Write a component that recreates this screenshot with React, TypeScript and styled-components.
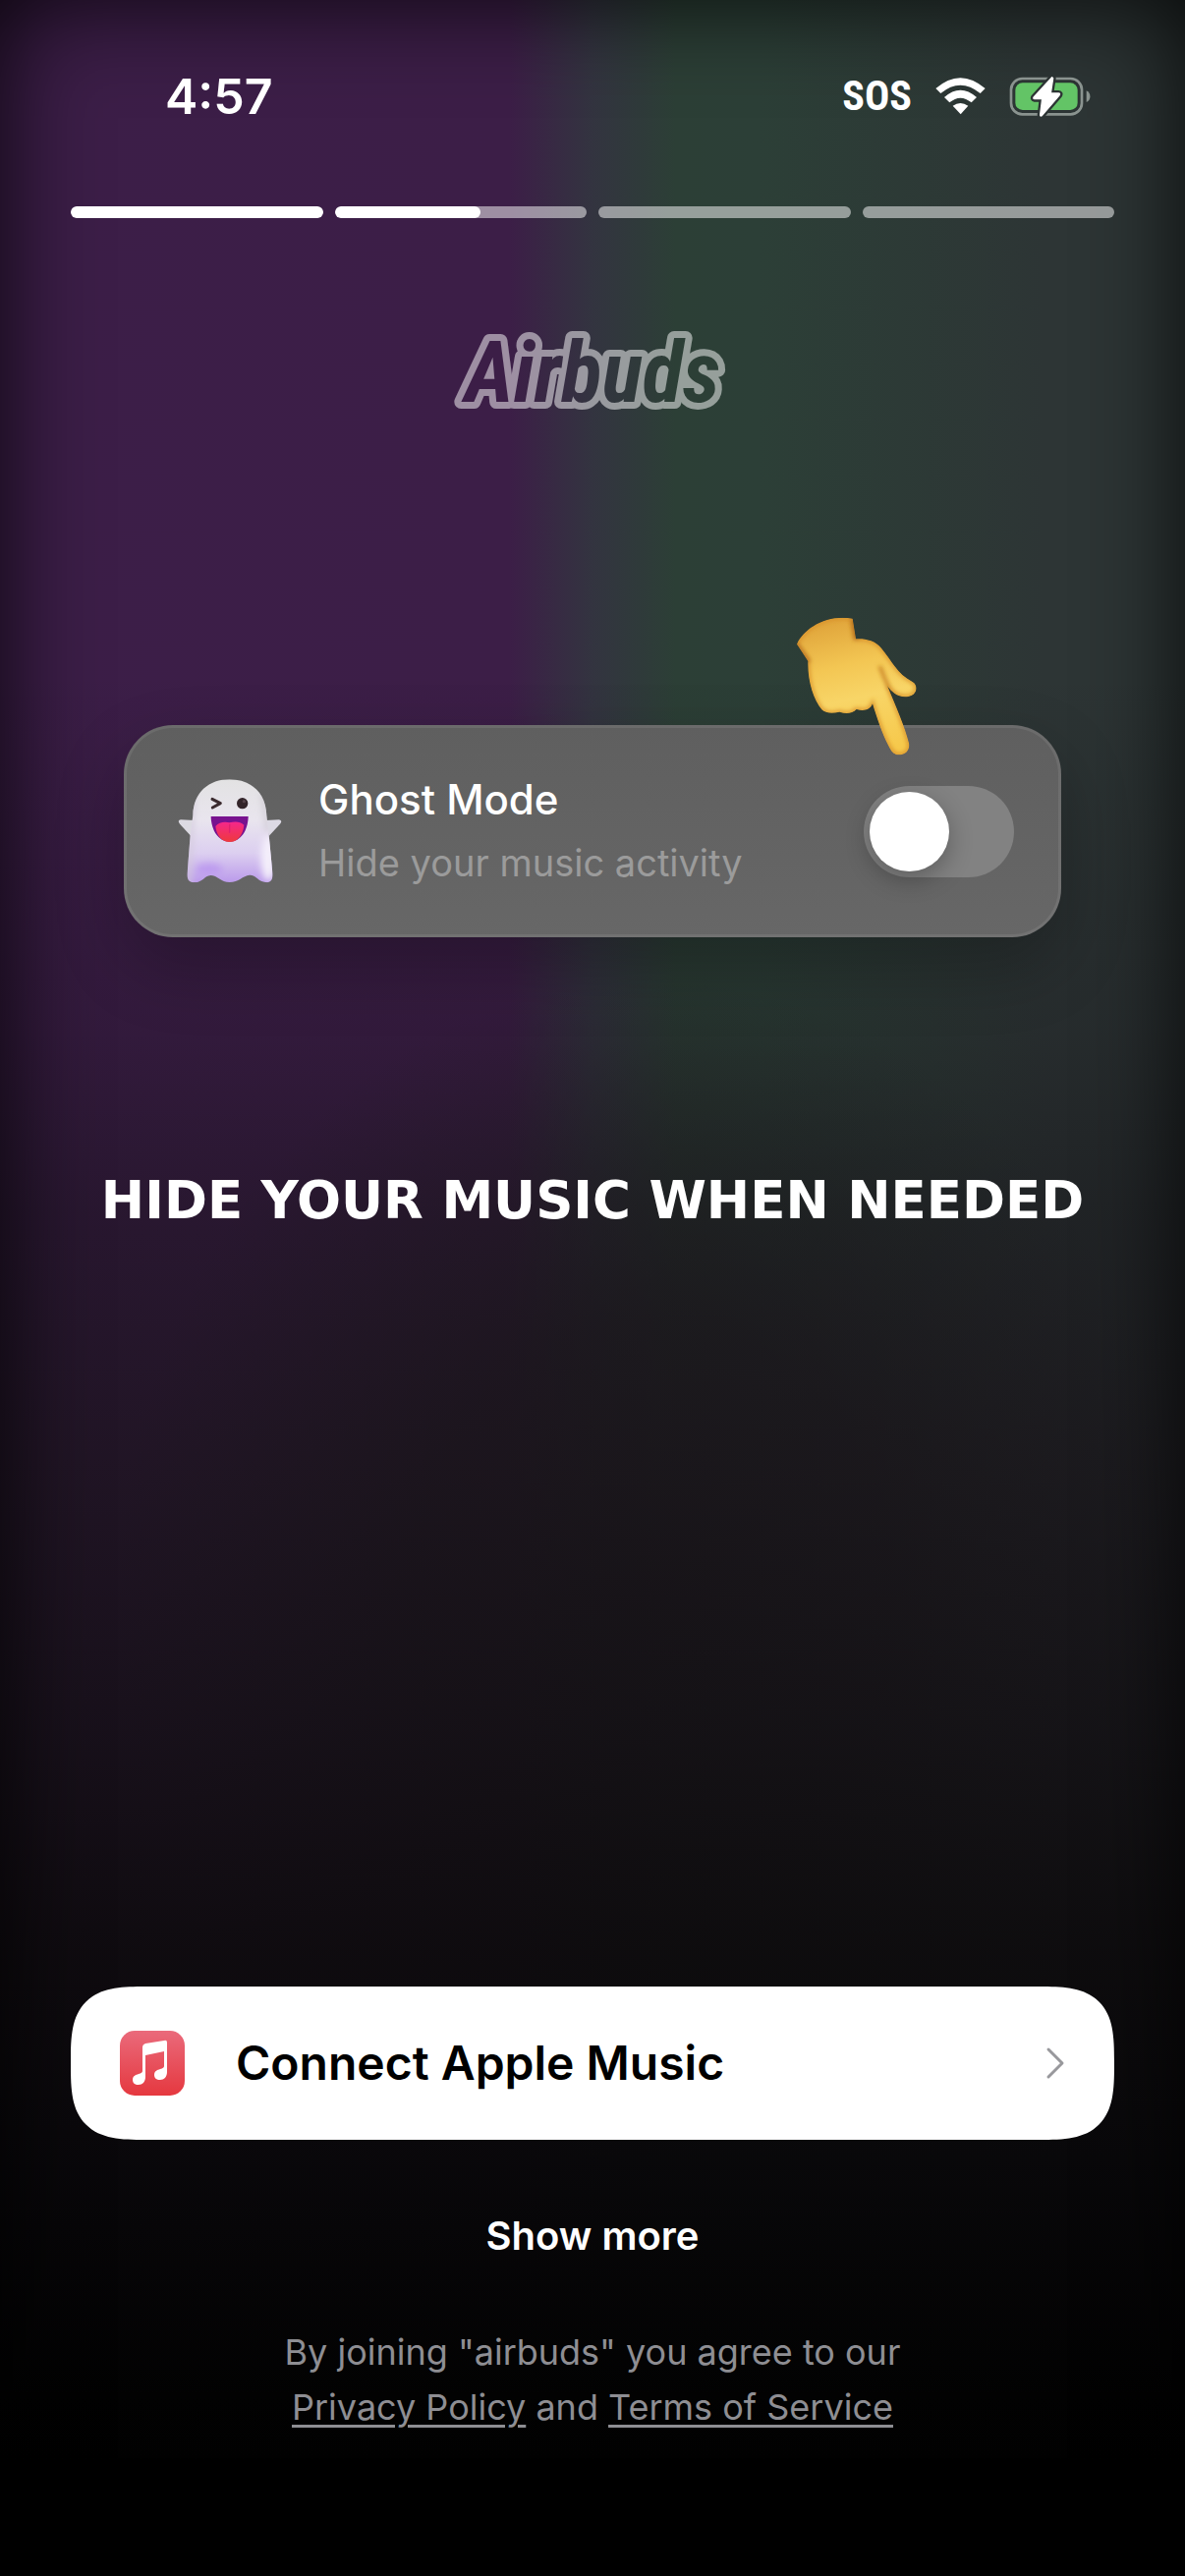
import { useState } from "react";
import styled, { createGlobalStyle } from "styled-components";

const GlobalStyle = createGlobalStyle`
  *,
  *::before,
  *::after {
    box-sizing: border-box;
  }
  body {
    margin: 0;
    background: #000;
    color: white;
    font-family: Inter, "Liberation Sans", sans-serif;
  }
`;

const Screen = styled.div`
  display: flex;
  flex-direction: column;
  min-height: 100vh;
  box-shadow: inset 0 0 100px rgba(0, 0, 0, 0.85);
  background:
    linear-gradient(
      180deg,
      rgba(16, 12, 18, 0) 26%,
      rgba(16, 12, 18, 0.22) 40%,
      rgba(18, 15, 20, 0.46) 47%,
      rgba(21, 17, 22, 0.7) 57%,
      rgba(17, 14, 18, 0.83) 67%,
      rgba(12, 10, 12, 0.94) 76%,
      rgba(8, 7, 9, 0.98) 84%,
      #020202 93%,
      #000 98%
    ),
    radial-gradient(
      45% 24% at 55% 62%,
      rgba(36, 30, 36, 0.9) 0%,
      rgba(36, 30, 36, 0.7) 45%,
      rgba(36, 30, 36, 0) 100%
    ),
    linear-gradient(
      90deg,
      #3c1e48 0%,
      #3c1e47 43%,
      #333440 50%,
      #2c3f36 57%,
      #2c3f37 64%,
      #2d3535 88%
    );
`;

const StatusBar = styled.header`
  display: flex;
  align-items: center;
  justify-content: space-between;
  padding: 66px 96px 0 168px;
`;

const Time = styled.time`
  font-size: 50px;
  font-weight: 600;
  line-height: 64px;
`;

const StatusIcons = styled.div`
  display: flex;
  align-items: center;
  gap: 24px;
`;

const Carrier = styled.span`
  font-family: "Liberation Sans Narrow", "Roboto Condensed", Roboto, sans-serif;
  font-size: 42px;
  font-weight: 700;
  line-height: 64px;
`;

const Progress = styled.div`
  display: flex;
  gap: 12px;
  padding: 80px 72px 0;
`;

const Segment = styled.div`
  flex: 1;
  height: 12px;
  border-radius: 6px;
  overflow: hidden;
  background: rgba(255, 255, 255, 0.5);
`;

const SegmentFill = styled.div<{ $percent: number }>`
  width: ${({ $percent }) => $percent}%;
  height: 100%;
  border-radius: 6px;
  background: white;
`;

const Brand = styled.div`
  display: flex;
  justify-content: center;
  padding-top: 104px;
`;

const Card = styled.section`
  position: relative;
  display: flex;
  align-items: center;
  margin: 308px 126px 0;
  padding: 41px 45px 41px 51px;
  gap: 36px;
  border: 3px solid rgba(255, 255, 255, 0.08);
  border-radius: 50px;
  background: linear-gradient(180deg, #5f5f5f, #676767) border-box;
  box-shadow: 0 30px 70px rgba(0, 0, 0, 0.24);
`;

const CardText = styled.label`
  flex: 1;
  display: flex;
  flex-direction: column;
`;

const CardTitle = styled.span`
  font-size: 42px;
  font-weight: 500;
  line-height: 64px;
`;

const CardSubtitle = styled.span`
  color: #9b9b9b;
  font-size: 38px;
  line-height: 64px;
`;

const Switch = styled.input`
  appearance: none;
  width: 153px;
  height: 93px;
  margin: 0;
  padding: 6px;
  display: flex;
  border-radius: 48px;
  background: #828282;
  &::before {
    content: "";
    width: 81px;
    height: 81px;
    border-radius: 50%;
    background: white;
    box-shadow: 0 8px 24px rgba(0, 0, 0, 0.28);
  }
  &:checked {
    justify-content: flex-end;
    background: #63c466;
  }
`;

const Pointer = styled.svg`
  position: absolute;
  right: 137px;
  top: -118px;
  pointer-events: none;
`;

const Headline = styled.h1`
  margin: 236px 0 0;
  font-family: "DejaVu Sans", Inter, sans-serif;
  font-size: 53px;
  font-weight: 700;
  line-height: 64px;
  text-align: center;
  text-transform: uppercase;
`;

const Footer = styled.footer`
  display: flex;
  flex-direction: column;
  align-items: center;
  margin-top: auto;
  padding: 0 72px 144px;
`;

const ConnectButton = styled.button`
  display: flex;
  align-items: center;
  width: 100%;
  gap: 52px;
  padding: 44px 50px;
  border: 0;
  border-radius: 56px;
  background: white;
  color: black;
  font: inherit;
  font-size: 48px;
  font-weight: 600;
  line-height: 68px;
  text-align: left;
  @supports (corner-shape: squircle) {
    border-radius: 76px;
    corner-shape: superellipse(1.6);
  }
`;

const ConnectLabel = styled.span`
  flex: 1;
`;

const ShowMore = styled.button`
  margin-top: 70px;
  padding: 0;
  border: 0;
  background: none;
  color: white;
  font: inherit;
  font-size: 40px;
  font-weight: 600;
  line-height: 56px;
`;

const Legal = styled.p`
  margin: 62px 0 0;
  color: #8e8e93;
  font-size: 36px;
  line-height: 56px;
  text-align: center;
`;

const LegalLink = styled.a`
  color: inherit;
  text-decoration: underline;
  text-decoration-thickness: 3px;
  text-underline-offset: 5px;
`;

const WifiIcon = () => (
  <svg width="51" height="38" viewBox="342 56 153 114" fill="white" aria-hidden>
    <path d="M343 89Q418 24 494 89L479 104Q418 54 358 104Z" />
    <path d="M369 116Q418 72 468 116L452 132Q418 104 385 132Z" />
    <path d="M395 142Q418 126 442 142L419 168Z" />
  </svg>
);

const BatteryIcon = () => (
  <svg width="83" height="42" viewBox="560 49 249 126" aria-hidden>
    <defs>
      <mask id="bolt-gap">
        <rect x="550" y="40" width="270" height="140" fill="white" />
        <path
          d="M691 54L636 114Q632 119 638 120H661L655 168Q655 174 660 171L713 109Q717 103 711 103H687L694 57Z"
          fill="black"
          stroke="black"
          strokeWidth="18"
          strokeLinejoin="round"
        />
      </mask>
    </defs>
    <g mask="url(#bolt-gap)">
      <rect
        x="566"
        y="58"
        width="216"
        height="109"
        rx="34"
        fill="none"
        stroke="#8a938f"
        strokeWidth="8"
      />
      <rect x="579" y="71" width="190" height="83" rx="22" fill="#63c466" />
    </g>
    <path d="M796 95C811 101 811 124 796 130Z" fill="#8a938f" />
    <path
      d="M691 54L636 114Q632 119 638 120H661L655 168Q655 174 660 171L713 109Q717 103 711 103H687L694 57Z"
      fill="white"
      stroke="white"
      strokeWidth="4"
      strokeLinejoin="round"
    />
  </svg>
);

const Logo = () => (
  <svg width="300" height="104" viewBox="0 0 300 104" role="img" aria-label="Airbuds">
    <defs>
      <mask id="logo-mask">
        <g
          fontFamily="'Liberation Sans Narrow', 'Roboto Condensed', Roboto, sans-serif"
          fontSize="86"
          fontWeight="700"
          fontStyle="italic"
          textAnchor="middle"
        >
          <text x="150" y="83" fill="white" stroke="white" strokeWidth="14" strokeLinejoin="round">
            Airbuds
          </text>
          <text x="150" y="83" fill="black">
            Airbuds
          </text>
        </g>
      </mask>
    </defs>
    <rect width="300" height="104" fill="white" fillOpacity="0.5" mask="url(#logo-mask)" />
  </svg>
);

const GhostIcon = () => (
  <svg width="108" height="108" viewBox="62 66 322 324" aria-hidden>
    <defs>
      <linearGradient id="ghost-body" x1="0" y1="0" x2="0" y2="1">
        <stop offset="0" stopColor="#e2e2e2" />
        <stop offset="0.4" stopColor="#e9e5ee" />
        <stop offset="0.7" stopColor="#dccff0" />
        <stop offset="1" stopColor="#b794ea" />
      </linearGradient>
      <linearGradient id="ghost-tongue" x1="0" y1="0" x2="0" y2="1">
        <stop offset="0" stopColor="#f5268c" />
        <stop offset="1" stopColor="#ee3a3c" />
      </linearGradient>
      <clipPath id="ghost-clip">
        <path d="M110 180C112 108 160 70 222 70C285 70 333 108 335 180L342 240L353 355C356 385 338 388 322 382C305 375 300 361 283 362C262 364 250 384 222 384C195 384 185 363 165 363C148 363 145 377 126 383C106 388 90 382 93 355L102 240Z" />
      </clipPath>
      <filter id="ghost-soft" x="-50%" y="-50%" width="200%" height="200%">
        <feGaussianBlur stdDeviation="11" />
      </filter>
    </defs>
    <path d="M70 206Q61 195 73 193L114 195L104 243Z" fill="#dcdae2" />
    <path d="M376 206Q385 195 373 193L332 195L342 243Z" fill="#dcd9e4" />
    <g clipPath="url(#ghost-clip)">
      <rect x="85" y="60" width="275" height="335" fill="url(#ghost-body)" />
      <g filter="url(#ghost-soft)">
        <ellipse cx="340" cy="310" rx="22" ry="70" fill="#f4effb" />
        <path d="M110 80L96 400" stroke="#d3cadb" strokeWidth="14" />
        <ellipse cx="160" cy="345" rx="40" ry="18" fill="#bd9bef" />
        <path d="M325 110L340 230" stroke="#c9c5cd" strokeWidth="12" />
      </g>
    </g>
    <path
      d="M169 130L194 143L170 156"
      fill="none"
      stroke="#3b2b2f"
      strokeWidth="9"
      strokeLinecap="round"
      strokeLinejoin="round"
    />
    <ellipse cx="261" cy="143" rx="17" ry="17" fill="#33242a" />
    <circle cx="266" cy="137" r="5" fill="#54424a" />
    <path d="M165 183H279C278 226 256 260 222 260C188 260 166 226 165 183Z" fill="#78128f" />
    <path
      d="M179 213Q195 196 222 202Q249 194 266 209C263 242 245 261 222 261C198 261 182 242 179 213Z"
      fill="url(#ghost-tongue)"
    />
    <path d="M222 208V232" stroke="#e0206f" strokeWidth="4" strokeLinecap="round" />
  </svg>
);

const HAND =
  "M92 138C112 92 180 46 262 60L272 122C300 120 330 126 350 150C385 192 396 226 445 253C460 262 460 280 448 291C430 303 405 300 390 288C378 278 374 274 368 264C395 330 422 390 434 440C438 460 425 476 405 476C388 477 379 464 370 445C352 410 337 366 323 320C316 338 298 344 274 337C262 351 240 351 222 345C200 351 178 349 168 338C142 306 124 250 126 190Z";

const PointingHand = () => (
  <Pointer width="133" height="150" viewBox="80 40 399 450" aria-hidden>
    <defs>
      <linearGradient id="hand-skin" x1="0.3" y1="0" x2="0.5" y2="1">
        <stop offset="0" stopColor="#dfa33a" />
        <stop offset="0.35" stopColor="#f3c653" />
        <stop offset="0.6" stopColor="#f8d567" />
        <stop offset="1" stopColor="#f6c94c" />
      </linearGradient>
      <clipPath id="hand-clip">
        <path d={HAND} />
      </clipPath>
      <filter id="hand-soft" x="-30%" y="-30%" width="160%" height="160%">
        <feGaussianBlur stdDeviation="7" />
      </filter>
    </defs>
    <g clipPath="url(#hand-clip)">
      <path d={HAND} fill="url(#hand-skin)" />
      <g fill="none" filter="url(#hand-soft)">
        <path d={HAND} stroke="#d9922a" strokeWidth="11" />
        <path d="M88 134L130 192" stroke="#b46a1c" strokeWidth="12" />
        <path d="M264 60L274 124" stroke="#b8701f" strokeWidth="18" />
        <path d="M345 205Q360 245 375 275" stroke="#c77f22" strokeWidth="10" />
      </g>
    </g>
  </Pointer>
);

const AppleMusicIcon = () => (
  <svg width="66" height="66" viewBox="0 0 66 66" aria-hidden>
    <defs>
      <linearGradient id="music-bg" x1="0" y1="0" x2="0" y2="1">
        <stop offset="0" stopColor="#ea6a7b" />
        <stop offset="1" stopColor="#e5383f" />
      </linearGradient>
    </defs>
    <rect width="66" height="66" rx="15" fill="url(#music-bg)" />
    <path
      d="M23 17Q23 14 26 13L45 10Q48 9 48 12V42C48 47 45 50 41 50C37 50 35 48 35 45C35 41 38 40 41 39Q45 38 45 36V21L26 25V47C26 52 23 55 19 55C15 55 13 53 13 50C13 46 16 45 19 44Q23 43 23 41Z"
      fill="white"
    />
  </svg>
);

const ChevronIcon = () => (
  <svg width="20" height="34" viewBox="0 0 20 34" fill="none" aria-hidden>
    <path
      d="M3 3L17 17L3 31"
      stroke="#98989c"
      strokeWidth="3"
      strokeLinecap="round"
      strokeLinejoin="round"
    />
  </svg>
);

const progress = [100, 58, 0, 0];

export default function App() {
  const [ghostMode, setGhostMode] = useState(false);

  return (
    <>
      <GlobalStyle />
      <Screen>
        <StatusBar>
          <Time>4:57</Time>
          <StatusIcons>
            <Carrier>SOS</Carrier>
            <WifiIcon />
            <BatteryIcon />
          </StatusIcons>
        </StatusBar>
        <Progress>
          {progress.map((percent, i) => (
            <Segment key={i}>
              <SegmentFill $percent={percent} />
            </Segment>
          ))}
        </Progress>
        <Brand>
          <Logo />
        </Brand>
        <Card>
          <GhostIcon />
          <CardText htmlFor="ghost-mode">
            <CardTitle>Ghost Mode</CardTitle>
            <CardSubtitle>Hide your music activity</CardSubtitle>
          </CardText>
          <Switch
            id="ghost-mode"
            type="checkbox"
            role="switch"
            checked={ghostMode}
            onChange={(e) => setGhostMode(e.target.checked)}
          />
          <PointingHand />
        </Card>
        <Headline>Hide your music when needed</Headline>
        <Footer>
          <ConnectButton type="button">
            <AppleMusicIcon />
            <ConnectLabel>Connect Apple Music</ConnectLabel>
            <ChevronIcon />
          </ConnectButton>
          <ShowMore type="button">Show more</ShowMore>
          <Legal>
            By joining "airbuds" you agree to our
            <br />
            <LegalLink href="#privacy">Privacy Policy</LegalLink> and{" "}
            <LegalLink href="#terms">Terms of Service</LegalLink>
          </Legal>
        </Footer>
      </Screen>
    </>
  );
}
